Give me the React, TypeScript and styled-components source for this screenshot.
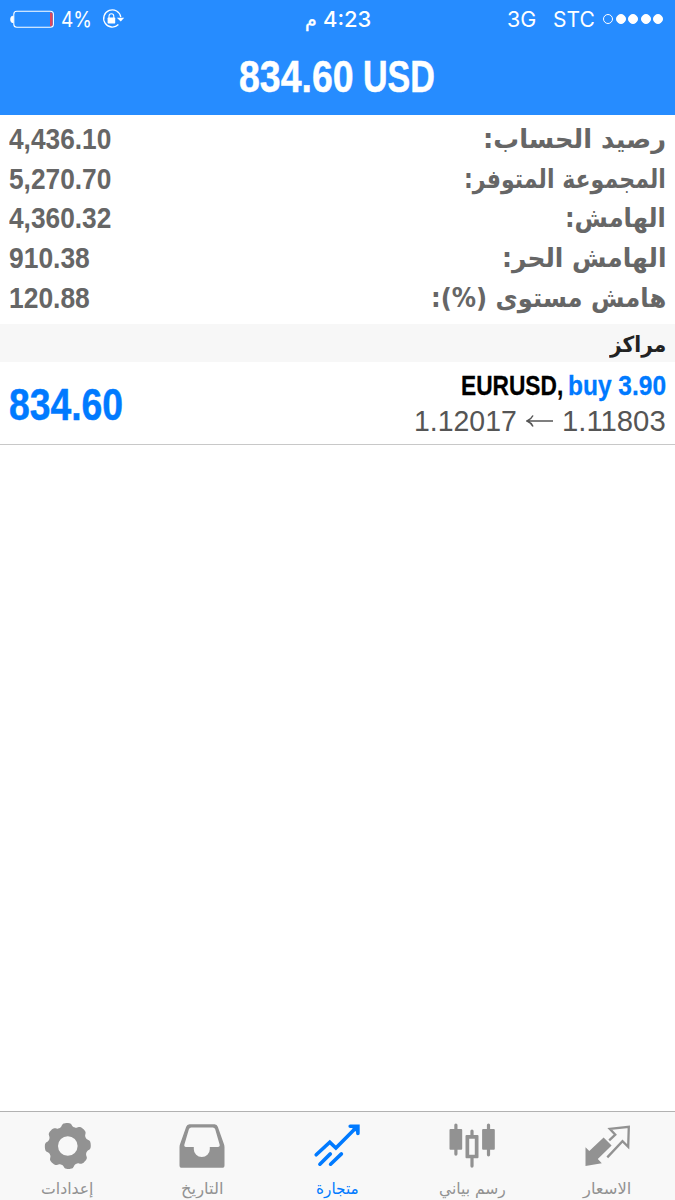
import React, { useLayoutEffect, useRef, useState } from 'react';
import styled, { createGlobalStyle } from 'styled-components';

const GlobalStyle = createGlobalStyle`
  * { box-sizing: border-box; }
  body { margin: 0; background: #fff; }
`;

const latin = `'Liberation Sans', 'DejaVu Sans', sans-serif`;
const arabic = `'DejaVu Sans', sans-serif`;
const status = `Inter, 'DejaVu Sans', sans-serif`;

const Screen = styled.div`
  direction: rtl;
  width: 675px;
  height: 1200px;
  display: flex;
  flex-direction: column;
  background: #fff;
  overflow: hidden;
`;

/* Text that is condensed or expanded horizontally to a given width */
const FitBox = styled.span<{ $w: number; $dir: 'ltr' | 'rtl' }>`
  display: flex;
  flex: none;
  justify-content: flex-start;
  width: ${(p) => p.$w}px;
  direction: ${(p) => p.$dir};
`;
const FitInner = styled.span<{ $dir: 'ltr' | 'rtl' }>`
  flex: none;
  white-space: nowrap;
  transform-origin: ${(p) => (p.$dir === 'rtl' ? 'right' : 'left')} center;
`;
function Fit({ w, dir = 'ltr', children }: { w: number; dir?: 'ltr' | 'rtl'; children: React.ReactNode }) {
  const ref = useRef<HTMLSpanElement>(null);
  const [scale, setScale] = useState(1);
  useLayoutEffect(() => {
    if (ref.current && ref.current.offsetWidth) setScale(w / ref.current.offsetWidth);
  }, [w]);
  return (
    <FitBox $w={w} $dir={dir}>
      <FitInner ref={ref} $dir={dir} style={{ transform: `scaleX(${scale})` }}>
        {children}
      </FitInner>
    </FitBox>
  );
}

const Header = styled.header`
  flex: none;
  height: 115px;
  background: #268cff;
  color: #fff;
`;
const StatusBar = styled.div`
  direction: ltr;
  height: 38px;
  display: grid;
  grid-template-columns: 1fr auto 1fr;
  align-items: center;
  padding: 0 12px 1px 10px;
  font: 400 21.5px/26px ${status};
`;
const StatusGroup = styled.div<{ $end?: boolean }>`
  display: flex;
  align-items: center;
  justify-content: ${(p) => (p.$end ? 'flex-end' : 'flex-start')};
`;
const BatteryIcon = styled.svg`
  width: 45px;
  height: 20px;
  margin-right: 6px;
`;
const LockIcon = styled.svg`
  width: 24px;
  height: 24px;
  margin-left: 10px;
`;
const Clock = styled.div`
  direction: rtl;
  display: flex;
  align-items: center;
  gap: 6px;
  padding-left: 3px;
  font-weight: 500;
`;
const Meridiem = styled.span`
  font: 400 19px/26px ${arabic};
  -webkit-text-stroke: 0.4px currentColor;
`;
const Carrier = styled.span`
  margin: 0 8px 0 17px;
`;
const Signal = styled.div`
  display: flex;
  gap: 2.5px;
`;
const Dot = styled.i<{ $empty?: boolean }>`
  width: 10px;
  height: 10px;
  border-radius: 50%;
  border: 1px solid #fff;
  background: ${(p) => (p.$empty ? 'transparent' : '#fff')};
`;
const Title = styled.h1`
  direction: ltr;
  margin: 0;
  height: 77px;
  display: flex;
  align-items: center;
  justify-content: center;
  gap: 9px;
  padding-right: 2px;
  font: 700 44px/50px ${latin};
  -webkit-text-stroke: 0.5px currentColor;
`;

const Summary = styled.dl`
  flex: none;
  margin: 0;
  height: 209px;
  padding: 5px 9px 0;
  color: #666;
`;
const SummaryRow = styled.div`
  height: 39.6px;
  display: flex;
  justify-content: space-between;
  align-items: center;
`;
const Label = styled.dt`
  font: 700 26px/39px ${arabic};
`;
const Value = styled.dd`
  margin: 0;
  padding-bottom: 2px;
  font: 700 30px/37px ${latin};
`;

const SectionTitle = styled.h2`
  flex: none;
  margin: 0;
  height: 38px;
  padding: 4px 9px 0;
  background: #f7f7f7;
  color: #222;
  display: flex;
  align-items: center;
  font: 700 22px/34px ${arabic};
`;

const Position = styled.div`
  flex: none;
  height: 83px;
  padding: 0 9px;
  border-bottom: 1px solid #c8c8c8;
  display: flex;
  justify-content: space-between;
  align-items: center;
`;
const PositionInfo = styled.div`
  display: flex;
  flex-direction: column;
  align-items: flex-start;
`;
const Deal = styled.div`
  direction: ltr;
  display: flex;
  gap: 5px;
  font: 700 28.5px/36px ${latin};
  color: #000;
  -webkit-text-stroke: 0.3px currentColor;
`;
const Side = styled.span`
  color: #007aff;
`;
const Prices = styled.div`
  direction: ltr;
  display: flex;
  align-items: center;
  gap: 9px;
  font: 400 29px/37px ${latin};
  color: #555;
`;
const ArrowIcon = styled.svg`
  width: 27px;
  height: 14px;
`;
const Profit = styled.div`
  padding-top: 3px;
  font: 700 43.5px/50px ${latin};
  color: #007aff;
  -webkit-text-stroke: 0.5px currentColor;
`;

const Body = styled.main`
  flex: 1;
`;

const TabBar = styled.nav`
  flex: none;
  height: 89px;
  border-top: 1px solid #b2b2b2;
  background: #f8f8f8;
  display: grid;
  grid-template-columns: repeat(5, 1fr);
`;
const Tab = styled.div<{ $active?: boolean }>`
  display: flex;
  flex-direction: column;
  align-items: center;
  padding-top: 8px;
  color: ${(p) => (p.$active ? '#007aff' : '#929292')};
`;
const TabIcon = styled.svg`
  flex: none;
  width: 54px;
  height: 50px;
`;
const TabLabel = styled.span`
  margin-top: 7px;
  padding-right: 1px;
  font: 400 16px/24px ${arabic};
`;

const gearPath =
  Array.from({ length: 240 }, (_, i) => {
    const a = (i / 240) * Math.PI * 2;
    const r = 21.2 + 1.8 * Math.tanh(1.7 * Math.cos(8 * (a + 0.05)) + 0.6);
    return `${i ? 'L' : 'M'}${(26.8 + r * Math.cos(a)).toFixed(2)} ${(26 + r * Math.sin(a)).toFixed(2)}`;
  }).join('') + 'Z M36.6 26a9.8 9.8 0 1 0-19.6 0a9.8 9.8 0 1 0 19.6 0Z';

const icons: Record<string, React.ReactNode> = {
  quotes: (
    <>
      <path fill="currentColor" d="M4.5 27.3 8.3 31 22.6 17.6 30.6 25.6 16.8 39 20.8 43.2 4.5 46Z" />
      <path fill="none" stroke="currentColor" strokeWidth="2.3" d="M28.2 20.4 34.3 14.7 28.8 8.9 47.8 6.8 47.2 26.8 41.5 21.2 26.3 37.4" />
    </>
  ),
  chart: (
    <>
      <path
        fill="currentColor"
        d="M4.5 9h3.8V5a1.6 1.6 0 0 1 3.2 0v4h3.7a1 1 0 0 1 1 1v18.8a1 1 0 0 1-1 1h-3.7v4.3a1.6 1.6 0 0 1-3.2 0v-4.3H4.5a1 1 0 0 1-1-1V10a1 1 0 0 1 1-1Z"
      />
      <path
        fill="currentColor"
        d="M37.1 9h3.8V5a1.6 1.6 0 0 1 3.2 0v4h3.7a1 1 0 0 1 1 1v18.8a1 1 0 0 1-1 1h-3.7v5a1.6 1.6 0 0 1-3.2 0v-5h-3.8a1 1 0 0 1-1-1V10a1 1 0 0 1 1-1Z"
      />
      <path
        fill="currentColor"
        fillRule="evenodd"
        d="M20.5 15h3.9v-4a1.6 1.6 0 0 1 3.2 0v4h3.9a1 1 0 0 1 1 1v21.3a1 1 0 0 1-1 1h-3.9v7.8a1.6 1.6 0 0 1-3.2 0v-7.8h-3.9a1 1 0 0 1-1-1V16a1 1 0 0 1 1-1ZM23.2 18.7v16h5.6v-16Z"
      />
    </>
  ),
  trade: (
    <g fill="none" stroke="currentColor" strokeWidth="3.6" strokeLinecap="round">
      <path d="M5.2 34.8 18.8 22.2 24.9 28 45.5 7.2" strokeLinejoin="miter" />
      <path d="M8.9 44.2 19.3 33.9M19.6 44.2 30.4 33.9" />
      <path d="M39.2 6.3H46.9V13.4" fill="currentColor" />
    </g>
  ),
  history: (
    <path
      fill="currentColor"
      fillRule="evenodd"
      d="M13.5 4.3H38.6Q41 4.3 41.8 6.8L47.9 24Q48.5 25.6 48.5 27.2V45.2Q48.5 47.8 46 47.8H6Q3.5 47.8 3.5 45.2V27.2Q3.5 25.6 4.1 24L10.2 6.8Q11 4.3 13.5 4.3ZM15.3 7.6Q13.5 7.6 12.9 9.3L8.4 24.6Q7.8 27 10 27H17.8V29.2A8 7.9 0 0 0 33.8 29.2V27H41.8Q44.2 27 43.6 24.6L39.2 9.3Q38.6 7.6 36.8 7.6Z"
    />
  ),
  settings: <path fill="currentColor" fillRule="evenodd" d={gearPath} />,
};

const rows = [
  { label: 'رصيد الحساب:', lw: 183, value: '4,436.10', vw: 102.5 },
  { label: 'المجموعة المتوفر:', lw: 202, value: '5,270.70', vw: 102.5 },
  { label: 'الهامش:', lw: 101, value: '4,360.32', vw: 102.5 },
  { label: 'الهامش الحر:', lw: 165, value: '910.38', vw: 81 },
  { label: 'هامش مستوى (%):', lw: 235, value: '120.88', vw: 81 },
];

const tabs = [
  { id: 'quotes', label: 'الاسعار', w: 48 },
  { id: 'chart', label: 'رسم بياني', w: 67 },
  { id: 'trade', label: 'متجارة', w: 43 },
  { id: 'history', label: 'التاريخ', w: 43 },
  { id: 'settings', label: 'إعدادات', w: 52 },
];

export default function App() {
  return (
    <Screen>
      <GlobalStyle />
      <Header>
        <StatusBar>
          <StatusGroup>
            <BatteryIcon viewBox="0 0 45 20">
              <path d="M3.2 7A2.6 3.4 0 0 0 3.2 13.8Z" fill="#fff" stroke="#fff" strokeWidth=".8" />
              <rect x="3.8" y="2.3" width="39.6" height="16" rx="3" fill="none" stroke="#fff" strokeWidth="1.1" />
              <path d="M40 3.4h1.2q1.4 0 1.4 1.6v10.6q0 1.6-1.4 1.6H40Z" fill="#e0475c" />
            </BatteryIcon>
            <Fit w={31}>4%</Fit>
            <LockIcon viewBox="0 0 24 24">
              <path d="M18.6 10.2A8.6 8.6 0 1 0 16.2 17.6" transform="translate(.2 -.1)" fill="none" stroke="#fff" strokeWidth="1.3" />
              <path d="M14.8 10.8h7.4l-3.4 3.6Z" fill="#fff" />
              <rect x="5.6" y="10.6" width="7.6" height="5.8" rx=".6" fill="#fff" />
              <path d="M7 11V9.2a2.4 2.4 0 0 1 4.8 0V11" fill="none" stroke="#fff" strokeWidth="1.1" />
            </LockIcon>
          </StatusGroup>
          <Clock>
            <Fit w={48}>4:23</Fit>
            <Meridiem>م</Meridiem>
          </Clock>
          <StatusGroup $end>
            <Fit w={29}>3G</Fit>
            <Carrier>
              <Fit w={42}>STC</Fit>
            </Carrier>
            <Signal>
              <Dot $empty />
              <Dot />
              <Dot />
              <Dot />
              <Dot />
            </Signal>
          </StatusGroup>
        </StatusBar>
        <Title>
          <Fit w={115}>834.60</Fit>
          <Fit w={72}>USD</Fit>
        </Title>
      </Header>
      <Summary>
        {rows.map((r) => (
          <SummaryRow key={r.label}>
            <Label>
              <Fit w={r.lw} dir="rtl">{r.label}</Fit>
            </Label>
            <Value>
              <Fit w={r.vw}>{r.value}</Fit>
            </Value>
          </SummaryRow>
        ))}
      </Summary>
      <SectionTitle>
        <Fit w={56} dir="rtl">مراكز</Fit>
      </SectionTitle>
      <Position>
        <PositionInfo>
          <Deal>
            <Fit w={102}>EURUSD,</Fit>
            <Side>
              <Fit w={98}>buy 3.90</Fit>
            </Side>
          </Deal>
          <Prices>
            <Fit w={103}>1.12017</Fit>
            <ArrowIcon viewBox="0 0 27 14">
              <path d="M27 7H1M7 1.5Q5 5.5 1 7Q5 8.5 7 12.5" fill="none" stroke="#555" strokeWidth="1.5" />
            </ArrowIcon>
            <Fit w={104}>1.11803</Fit>
          </Prices>
        </PositionInfo>
        <Profit>
          <Fit w={114}>834.60</Fit>
        </Profit>
      </Position>
      <Body />
      <TabBar>
        {tabs.map((t) => (
          <Tab key={t.id} $active={t.id === 'trade'}>
            <TabIcon viewBox="0 0 54 50">{icons[t.id]}</TabIcon>
            <TabLabel>
              <Fit w={t.w} dir="rtl">{t.label}</Fit>
            </TabLabel>
          </Tab>
        ))}
      </TabBar>
    </Screen>
  );
}
